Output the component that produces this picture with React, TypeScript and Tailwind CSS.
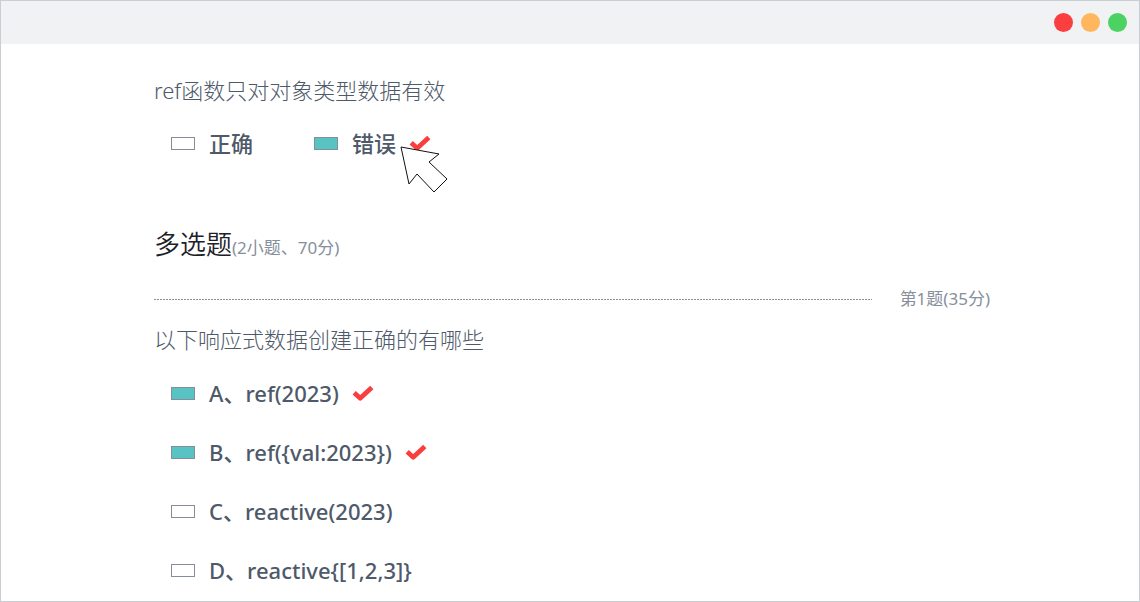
import { useState } from "react";

function Tick() {
  return (
    <svg className="h-[17px] w-[22px] shrink-0" viewBox="0 0 22 17" fill="none" aria-label="正确答案" role="img">
      <path d="M2.2 7.8 L8.2 13.2 L19.8 2.6" stroke="#fa3e3e" strokeWidth="4.8" strokeLinejoin="round" />
    </svg>
  );
}

type OptionProps = {
  type: "radio" | "checkbox";
  name: string;
  label: string;
  checked: boolean;
  answer?: boolean;
  onChange: () => void;
};

function Option({ type, name, label, checked, answer, onChange }: OptionProps) {
  return (
    <label className="flex items-center whitespace-nowrap">
      <input
        type={type}
        name={name}
        checked={checked}
        onChange={onChange}
        className="h-[13px] w-6 shrink-0 appearance-none border border-[#858d99] bg-white checked:bg-[#57c3c2]"
      />
      <span className="mr-[13px] ml-[14px]">{label}</span>
      {answer && <Tick />}
    </label>
  );
}

const options = [
  { label: "A、ref(2023)", answer: true },
  { label: "B、ref({val:2023})", answer: true },
  { label: "C、reactive(2023)", answer: false },
  { label: "D、reactive{[1,2,3]}", answer: false },
];

export default function App() {
  const [judge, setJudge] = useState("错误");
  const [picked, setPicked] = useState([true, true, false, false]);

  return (
    <div className="min-h-screen border border-[#c9cdd4] bg-white font-['Noto_Sans','Noto_Sans_CJK_SC',sans-serif] text-[#4e5969]">
      <header className="flex h-[43px] items-center justify-end gap-2 bg-[#f1f2f4] pr-3">
        <span className="size-[19px] rounded-full bg-[#f93f3f]" />
        <span className="size-[19px] rounded-full bg-[#ffb65c]" />
        <span className="size-[19px] rounded-full bg-[#4cd263]" />
      </header>

      <main className="pt-[30px] pr-[149px] pl-[153px]">
        <h2 className="text-[22px] leading-8 font-light">ref函数只对对象类型数据有效</h2>
        <div className="mt-[21px] flex gap-12 pl-[17px] text-[22px] leading-8 font-medium">
          <Option type="radio" name="judge" label="正确" checked={judge === "正确"} onChange={() => setJudge("正确")} />
          <div className="relative">
            <Option type="radio" name="judge" label="错误" checked={judge === "错误"} answer onChange={() => setJudge("错误")} />
            <svg className="pointer-events-none absolute top-[19px] left-[86px] h-[47px] w-12" viewBox="0 0 48 47" aria-hidden="true">
              <path d="M1 1 L39 8 L29 16 L47 33 L34 46 L17 28 L9 38 Z" fill="#fff" stroke="#111" strokeWidth="1" />
            </svg>
          </div>
        </div>

        <h1 className="mt-[65px] text-[26px] leading-10 font-[350] text-[#1d2129]">
          多选题<small className="text-[17px] font-normal text-[#86909c]">(2小题、70分)</small>
        </h1>
        <div className="mt-[19px] flex items-center gap-7">
          <hr className="h-px flex-1 border-0 bg-[repeating-linear-gradient(90deg,#86909c_0_2px,transparent_2px_3px)]" />
          <span className="text-[17px] leading-6 text-[#86909c]">第1题(35分)</span>
        </div>

        <h2 className="mt-3 text-[22px] leading-8 font-light">以下响应式数据创建正确的有哪些</h2>
        <div className="mt-[22px] flex flex-col gap-[27px] pl-[17px] text-[22px] leading-8 font-medium">
          {options.map((option, index) => (
            <Option
              key={option.label}
              type="checkbox"
              name="multiple"
              label={option.label}
              checked={picked[index]}
              answer={option.answer}
              onChange={() => setPicked(picked.map((value, i) => (i === index ? !value : value)))}
            />
          ))}
        </div>
      </main>
    </div>
  );
}
